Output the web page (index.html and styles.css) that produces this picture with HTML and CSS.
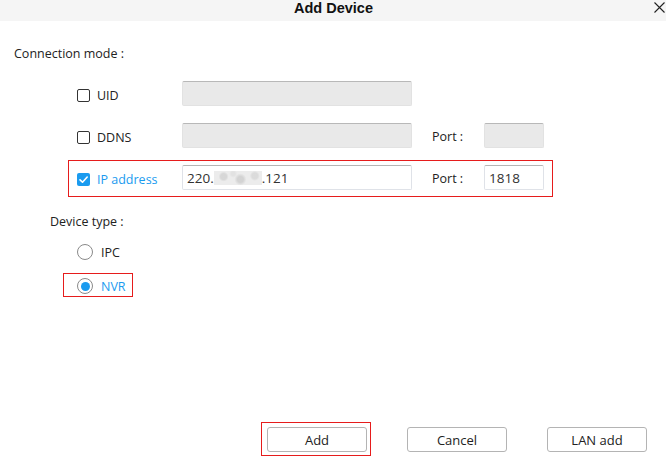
FILE: index.html
```html
<!DOCTYPE html>
<html>
<head>
<meta charset="utf-8">
<link rel="stylesheet" href="styles.css">
</head>
<body>
<div class="dialog">
  <div class="titlebar">
    <span class="spacer"></span>
    <span class="title">Add Device</span>
    <span class="close-wrap">
      <svg class="close" width="11" height="11" viewBox="0 0 11 11"><path d="M0.5 0.5 L10.5 10.5 M10.5 0.5 L0.5 10.5" stroke="#222" stroke-width="1.1" fill="none"/></svg>
    </span>
  </div>

  <div class="section-label">Connection mode :</div>

  <div class="conn-row">
    <label class="check-label"><span class="check"></span><span>UID</span></label>
    <div class="field disabled"></div>
  </div>

  <div class="conn-row">
    <label class="check-label"><span class="check"></span><span>DDNS</span></label>
    <div class="field disabled"></div>
    <span class="port-label">Port :</span>
    <div class="field port disabled"></div>
  </div>

  <div class="conn-row selected">
    <label class="check-label active"><span class="check checked"><svg width="13" height="13" viewBox="0 0 13 13"><path d="M3 6.8 L5.5 9.2 L10.2 4" stroke="#fff" stroke-width="1.6" fill="none" stroke-linecap="round" stroke-linejoin="round"/></svg></span><span>IP address</span></label>
    <div class="field"><span>220.</span><span class="blur"></span><span>.121</span></div>
    <span class="port-label">Port :</span>
    <div class="field port">1818</div>
  </div>

  <div class="section-label device">Device type :</div>

  <div class="radio-row">
    <span class="radio"></span><span>IPC</span>
  </div>
  <div class="radio-row selected active">
    <span class="radio on"></span><span>NVR</span>
  </div>

  <div class="footer">
    <div class="btn-wrap selected"><button class="btn">Add</button></div>
    <div class="btn-wrap"><button class="btn">Cancel</button></div>
    <div class="btn-wrap"><button class="btn">LAN add</button></div>
  </div>
</div>
</body>
</html>
```

FILE: styles.css
```css
html, body {
  margin: 0;
  padding: 0;
  background: #fff;
}
.dialog {
  width: 666px;
  height: 459px;
  display: flex;
  flex-direction: column;
  font-family: "Open Sans", "Noto Sans", sans-serif;
  font-size: 12.5px;
  color: #222;
  overflow: hidden;
}
.titlebar {
  height: 21px;
  background: #f5f5f5;
  display: grid;
  grid-template-columns: 1fr auto 1fr;
  align-items: start;
}
.title {
  font-family: "Liberation Sans", Arial, sans-serif;
  font-weight: bold;
  font-size: 14.5px;
  color: #111;
  line-height: 16px;
  padding-left: 1px;
}
.close-wrap {
  display: flex;
  justify-content: flex-end;
  padding-right: 1px;
  padding-top: 2px;
}
.section-label {
  margin-top: 24px;
  margin-left: 14px;
  line-height: 17px;
  height: 17px;
}
.section-label.device {
  margin-top: 16px;
  margin-left: 50px;
}
.conn-row {
  margin-left: 68px;
  width: 467px;
  border: 1px solid transparent;
  padding: 4px 8px 6px 8px;
  height: 25px;
  display: flex;
  align-items: center;
}
.conn-row + .conn-row { margin-top: 5px; }
.section-label + .conn-row { margin-top: 14px; }
.selected {
  border-color: #e61c1c !important;
}
.check-label {
  width: 105px;
  display: flex;
  align-items: center;
  gap: 7px;
  margin-top: 3px;
}
.active { color: #1a9bef; }
.check {
  width: 11px;
  height: 11px;
  border: 1px solid #333;
  border-radius: 2px;
  display: inline-block;
  flex: none;
}
.check.checked {
  background: #1a9bef;
  width: 13px;
  height: 13px;
  border: none;
  display: flex;
}
.field {
  width: 224px;
  height: 23px;
  border: 1px solid #dfe2e8;
  border-top-color: #b5b5b5;
  border-radius: 2px;
  background: #fff;
  box-sizing: content-box;
  padding: 0 0 0 4px;
  display: flex;
  align-items: center;
  color: #333;
  font-size: 13.5px;
  flex: none;
}
.field.port {
  width: 54px;
}
.field.disabled {
  background: #e9e9e9;
  border-color: #e2e2e2;
  border-top-color: #b8b8b8;
}
.blur {
  display: inline-block;
  width: 48px;
  height: 14px;
  background:
    radial-gradient(circle at 20% 40%, rgba(210,210,210,0.8) 0 3px, transparent 5px),
    radial-gradient(circle at 55% 60%, rgba(205,205,205,0.8) 0 3px, transparent 6px),
    radial-gradient(circle at 85% 35%, rgba(215,215,215,0.8) 0 3px, transparent 5px),
    radial-gradient(circle at 40% 20%, rgba(225,225,225,0.9) 0 2px, transparent 4px),
    #ececec;
}
.port-label {
  width: 52px;
  margin-left: 20px;
  margin-top: 2px;
  flex: none;
}
.radio-row {
  margin-left: 63px;
  border: 1px solid transparent;
  padding: 4px 6px 2px 13px;
  height: 16px;
  display: flex;
  align-items: center;
  gap: 8px;
  width: max-content;
}
.section-label + .radio-row { margin-top: 9px; }
.radio-row + .radio-row { margin-top: 10px; }
.radio {
  width: 14px;
  height: 14px;
  border: 1px solid #8a8a8a;
  border-radius: 50%;
  display: flex;
  align-items: center;
  justify-content: center;
  flex: none;
}
.radio.on::after {
  content: "";
  width: 9px;
  height: 9px;
  border-radius: 50%;
  background: #1a9bef;
}
.footer {
  margin-top: auto;
  margin-bottom: 3px;
  display: flex;
  justify-content: flex-end;
  gap: 30px;
  padding-right: 15px;
}
.btn-wrap {
  border: 1px solid transparent;
  padding: 4px 3px 3px 5px;
}
.btn {
  width: 100px;
  height: 25px;
  border: 1px solid #b4b4b4;
  border-radius: 3px;
  background: #fff;
  font-family: "Open Sans", "Noto Sans", sans-serif;
  font-size: 13px;
  color: #222;
  padding: 0;
  display: block;
}
```
